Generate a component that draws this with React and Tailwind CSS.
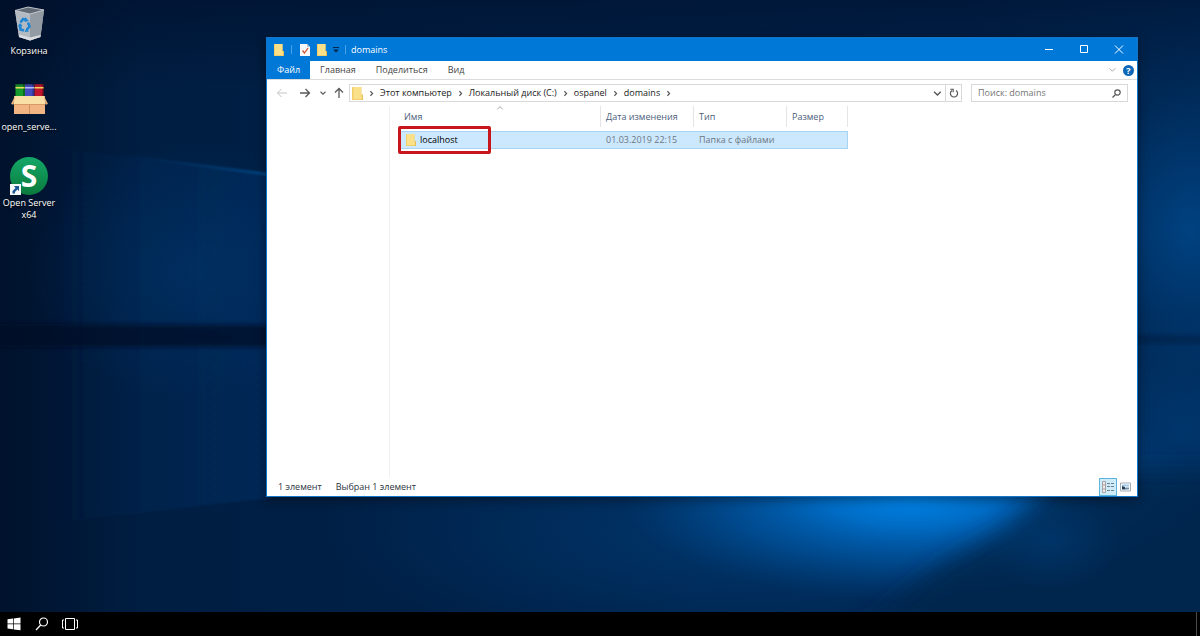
import React, { useState } from "react";

const crumbs = ["Этот компьютер", "Локальный диск (C:)", "ospanel", "domains"];

const tabs = ["Главная", "Поделиться", "Вид"];

const files = [
  {
    name: "localhost",
    date: "01.03.2019 22:15",
    type: "Папка с файлами",
    size: "",
  },
];

const columns = [
  { label: "Имя", width: "w-[202px]" },
  { label: "Дата изменения", width: "w-[93px]" },
  { label: "Тип", width: "w-[93px]" },
  { label: "Размер", width: "w-[61px]" },
];

const Wallpaper = () => (
  <svg
    className="absolute inset-0 w-full h-full"
    viewBox="0 0 1200 612"
    preserveAspectRatio="none"
    aria-hidden="true"
  >
    <defs>
      <linearGradient id="base" x1="0" y1="0" x2="1" y2="0">
        <stop offset="0" stopColor="#00122c" />
        <stop offset="0.12" stopColor="#001e42" />
        <stop offset="0.35" stopColor="#002046" />
        <stop offset="0.8" stopColor="#00234c" />
        <stop offset="1" stopColor="#002a58" />
      </linearGradient>
      <linearGradient id="topShade" x1="0" y1="0" x2="0" y2="1">
        <stop offset="0" stopColor="#000d28" stopOpacity="0.5" />
        <stop offset="1" stopColor="#000d28" stopOpacity="0" />
      </linearGradient>
      <radialGradient id="haze">
        <stop offset="0" stopColor="#003f7c" stopOpacity="0.7" />
        <stop offset="1" stopColor="#003f7c" stopOpacity="0" />
      </radialGradient>
      <radialGradient id="rightHaze">
        <stop offset="0" stopColor="#004c92" stopOpacity="0.7" />
        <stop offset="1" stopColor="#004c92" stopOpacity="0" />
      </radialGradient>
      <radialGradient id="glow">
        <stop offset="0" stopColor="#0088ee" />
        <stop offset="0.3" stopColor="#0074d2" stopOpacity="0.9" />
        <stop offset="0.65" stopColor="#0058a6" stopOpacity="0.6" />
        <stop offset="1" stopColor="#004888" stopOpacity="0" />
      </radialGradient>
      <linearGradient id="ray" x1="0" y1="0" x2="1" y2="0">
        <stop offset="0" stopColor="#00569c" stopOpacity="0" />
        <stop offset="1" stopColor="#0060ac" stopOpacity="0.6" />
      </linearGradient>
      <linearGradient id="panel" x1="0" y1="0" x2="1" y2="0">
        <stop offset="0" stopColor="#00397a" stopOpacity="0" />
        <stop offset="1" stopColor="#00397a" stopOpacity="0.35" />
      </linearGradient>
      <filter id="thin" x="-20%" y="-20%" width="140%" height="140%">
        <feGaussianBlur stdDeviation="1" />
      </filter>
      <filter id="soft" x="-20%" y="-20%" width="140%" height="140%">
        <feGaussianBlur stdDeviation="2" />
      </filter>
      <filter id="softer" x="-30%" y="-30%" width="160%" height="160%">
        <feGaussianBlur stdDeviation="12" />
      </filter>
    </defs>
    <rect width="1200" height="612" fill="url(#base)" />
    {/* left window pane */}
    <polygon points="40,146 270,175 270,498 40,524" fill="url(#panel)" filter="url(#thin)" />
    <ellipse cx="190" cy="270" rx="160" ry="130" fill="url(#haze)" opacity="0.5" />
    <ellipse cx="1190" cy="230" rx="110" ry="140" fill="url(#rightHaze)" />
    <ellipse cx="1180" cy="430" rx="120" ry="120" fill="url(#rightHaze)" opacity="0.5" />
    <rect width="1200" height="90" fill="url(#topShade)" />
    <polygon points="-10,324 270,325 270,347 -10,347" fill="#000f26" opacity="0.75" filter="url(#soft)" />
    <polygon points="1130,334 1210,336 1210,344 1130,344" fill="#001c40" opacity="0.5" filter="url(#soft)" />
    <polygon points="75,149 270,173 270,176" fill="url(#ray)" filter="url(#thin)" />
    {/* light below the explorer window */}
    <ellipse cx="760" cy="530" rx="440" ry="130" fill="url(#haze)" />
    <ellipse cx="910" cy="492" rx="290" ry="110" fill="url(#glow)" />
    <polygon
      points="1070,470 1010,528 940,566 850,640 1240,640 1240,470"
      fill="#00254e"
      opacity="0.88"
      filter="url(#softer)"
    />
    <ellipse cx="1050" cy="540" rx="70" ry="50" fill="url(#haze)" opacity="0.7" />
  </svg>
);

const FolderIcon = ({ className }) => (
  <svg className={className} viewBox="0 0 10 12" aria-hidden="true">
    <path d="M0 0h8.500v7H10v5H0z" fill="#e8be52" />
    <path d="M1 0h7.500v7.500H9V11.500H1z" fill="#fbe08a" />
    <path d="M0 0h1v12H0z" fill="#f3cf68" />
  </svg>
);

// one stroke icon for every arrow and chevron of the window
const Stroke = ({ d, className, width = 1 }) => (
  <svg
    className={className}
    viewBox="0 0 12 12"
    fill="none"
    stroke="currentColor"
    strokeWidth={width}
    aria-hidden="true"
  >
    <path d={d} />
  </svg>
);

const RecycleBin = () => (
  <svg className="w-[38px] h-[38px]" viewBox="0 0 38 38" aria-hidden="true">
    <path d="M5 5.500L18 2l16 3-3.500 27L20 35.500 9 32z" fill="#a9b0b8" />
    <path d="M5 5.500L20 9v26.500L9 32z" fill="#b4bac1" />
    <path d="M20 9l14-4-3.500 27L20 35.500z" fill="#929aa3" />
    <path d="M5 5.500L18 2l16 3-14 4z" fill="#626b75" />
    <path d="M5 5.500L18 2l16 3-14 4z" fill="none" stroke="#cfd4d9" strokeWidth="0.800" />
    <path d="M9 29.500L20 32.500l10.700-2.500-.5 2L20 35.500 9 32z" fill="#d9dde1" />
    <g fill="none" stroke="#1f86d6" strokeWidth="2.600">
      <path d="M10.500 17.500l2.500-3.500 3.500 1" />
      <path d="M18 17.500l1.500 4-2.500 3" />
      <path d="M14 25.500l-3.500-1-.5-4" />
    </g>
    <path d="M15 12l4 4-4.500 1zM19 26.500l-4.500.5 2-4zM7.500 21.500l2.500-3.500 2.500 3z" fill="#1f86d6" />
  </svg>
);

const Archive = () => (
  <svg className="w-[38px] h-[38px]" viewBox="0 0 38 38" aria-hidden="true">
    <rect x="5.500" y="3" width="9.500" height="14" fill="#159a2b" />
    <rect x="15" y="3" width="9.500" height="14" fill="#4449c0" />
    <rect x="24.500" y="3" width="9" height="14" fill="#c3152b" />
    <path d="M5.500 3h28v1.500h-28z" fill="#1c1c1c" opacity="0.4" />
    <path d="M13 3h2v14h-2zM22.500 3h2v14h-2zM32 3h1.500v14H32z" fill="#000" opacity="0.3" />
    <path d="M5.500 6h9v1.500h-9zM24.500 6h9v1.500h-9z" fill="#ecd65a" />
    <path d="M15 6h9v1.500h-9z" fill="#b9bcf0" />
    <path d="M4 15h31v18H4z" fill="#f0b583" />
    <path d="M5 15h29l1.500 8h-32z" fill="#f9dfa6" />
    <path d="M5 15L1 23l2.500.8zM34 15l4 8-2.500.8z" fill="#e6b07d" />
    <path d="M19 23.500h1V33h-1z" fill="#cf8f59" />
    <path d="M4 23h31v1H4z" fill="#d89a64" />
  </svg>
);

const OpenServer = () => (
  <div className="relative w-[38px] h-[38px] rounded-full bg-linear-to-b from-[#14a869] to-[#0a7a3c] flex items-center justify-center">
    <span className="text-white font-bold text-[30px] leading-none">S</span>
    <svg className="absolute left-0 bottom-0 w-[11px] h-[11px]" viewBox="0 0 11 11" aria-hidden="true">
      <path d="M0 0h11v11H0z" fill="#f4f8fb" />
      <path d="M4 2h5v5L7.400 5.400 5 8v1.500H2.500V7l3-3z" fill="#1b5796" />
    </svg>
  </div>
);

const shortcuts = [
  { label: "Корзина", icon: <RecycleBin /> },
  { label: "open_serve...", icon: <Archive /> },
  { label: "Open Server x64", icon: <OpenServer /> },
];

const TitleBar = () => (
  <header className="flex items-center h-[23px] shrink-0 bg-[#0078d7] text-white">
    <div className="flex items-center pl-[7px]">
      <FolderIcon className="w-[10px] h-[12px]" />
      <span className="w-px h-[9px] ml-[7px] bg-[#4aa0e4]" />
      <button aria-label="Свойства" className="ml-[8px]">
        <svg className="w-[10px] h-[12px]" viewBox="0 0 10 12" aria-hidden="true">
          <path d="M0 0h7l3 3v9H0z" fill="#f7f8fa" />
          <path d="M7 0v3h3z" fill="#b9c4cf" />
          <path d="M2.500 6.500l2 2.500 3.500-5" fill="none" stroke="#d0532f" strokeWidth="1.300" />
        </svg>
      </button>
      <button aria-label="Новая папка" className="ml-[7px]">
        <FolderIcon className="w-[10px] h-[12px]" />
      </button>
      <button aria-label="Настройка панели" className="ml-[6px]">
        <svg className="w-[6px] h-[6px]" viewBox="0 0 6 6" aria-hidden="true">
          <path d="M0 0h6v1H0zM0 2.500h6L3 5.500z" fill="#06284c" />
        </svg>
      </button>
      <span className="w-px h-[9px] ml-[6px] bg-[#4aa0e4]" />
    </div>
    <h1 className="flex-1 pl-[5px]">domains</h1>
    <button aria-label="Свернуть" className="w-[35px] h-full flex items-center justify-center">
      <Stroke className="w-[12px] h-[12px]" d="M2 5.500h8" />
    </button>
    <button aria-label="Развернуть" className="w-[35px] h-full flex items-center justify-center">
      <Stroke className="w-[12px] h-[12px]" d="M2.500 1.500h7v7h-7z" />
    </button>
    <button aria-label="Закрыть" className="w-[36px] h-full flex items-center justify-center">
      <Stroke className="w-[12px] h-[12px]" d="M2 1.500l8 8M10 1.500l-8 8" />
    </button>
  </header>
);

const Ribbon = () => (
  <nav className="flex items-stretch h-[19px] shrink-0 border-b border-[#dadbdc] text-[#444]">
    <button className="px-[10px] bg-[#0078d7] text-white">Файл</button>
    {tabs.map((tab) => (
      <button key={tab} className="px-[10px]">
        {tab}
      </button>
    ))}
    <div className="flex items-center ml-auto pr-[3px] gap-[6px]">
      <button aria-label="Развернуть ленту">
        <Stroke className="w-[10px] h-[10px] text-[#999]" d="M3 4l3.500 3.500L10 4" />
      </button>
      <button
        aria-label="Справка"
        className="w-[11px] h-[11px] rounded-full bg-[#0c67b8] text-white text-[9px] leading-none font-bold"
      >
        ?
      </button>
    </div>
  </nav>
);

const AddressBar = () => {
  const [query, setQuery] = useState("");

  return (
    <div className="flex items-center h-[26px] shrink-0 pr-[9px]">
      <div className="flex items-center w-[82px] shrink-0 pl-[9px] text-[#5a5a5a]">
        <button aria-label="Назад" className="text-[#c4c4c4]">
          <Stroke className="w-[12px] h-[12px]" d="M11 6H1.500M5.500 2L1.500 6l4 4" />
        </button>
        <button aria-label="Вперед" className="ml-[11px]">
          <Stroke className="w-[12px] h-[12px]" width={1.3} d="M1 6h9.500M6.500 2l4 4-4 4" />
        </button>
        <button aria-label="Последние расположения" className="ml-[7px]">
          <Stroke className="w-[10px] h-[10px]" width={1.3} d="M3 4.500L6 7.500l3-3" />
        </button>
        <button aria-label="Вверх" className="ml-[5px]">
          <Stroke className="w-[12px] h-[12px]" width={1.3} d="M6 11V1.500M2 5.500l4-4 4 4" />
        </button>
      </div>

      <div className="flex items-center flex-1 h-[18px] border border-[#d9d9d9]">
        <FolderIcon className="w-[11px] h-[13px] ml-[2px]" />
        <ol className="flex items-center text-[#1a1a1a]">
          {[...crumbs, ""].map((crumb) => (
            <li key={crumb} className="flex items-center">
              <Stroke className="w-[9px] h-[9px] mx-[4px] text-[#555]" width={1.5} d="M4.500 3l3 3-3 3" />
              {crumb && <a href="#">{crumb}</a>}
            </li>
          ))}
        </ol>
        <button aria-label="Предыдущие расположения" className="ml-auto px-[3px] text-[#555]">
          <Stroke className="w-[10px] h-[10px]" width={1.6} d="M2.500 4.500l4 4 4-4" />
        </button>
        <button
          aria-label="Обновить"
          className="h-full w-[16px] border-l border-[#d9d9d9] flex items-center justify-center text-[#555]"
        >
          <Stroke
            className="w-[10px] h-[10px]"
            width={1.4}
            d="M8.500 3A4.300 4.300 0 1 1 3.500 3M1.500 1.500h3.500v3.500"
          />
        </button>
      </div>

      <label className="flex items-center w-[157px] h-[18px] ml-[9px] px-[6px] border border-[#d9d9d9]">
        <input
          type="text"
          aria-label="Поиск"
          placeholder="Поиск: domains"
          value={query}
          onChange={(e) => setQuery(e.target.value)}
          className="flex-1 min-w-0 outline-none placeholder:text-[#757575]"
        />
        <svg
          className="w-[9px] h-[9px] text-[#555]"
          viewBox="0 0 9 9"
          fill="none"
          stroke="currentColor"
          strokeWidth="1.200"
          aria-hidden="true"
        >
          <circle cx="5.500" cy="3.500" r="2.700" />
          <path d="M3.500 5.500L.5 8.500" />
        </svg>
      </label>
    </div>
  );
};

const FileList = () => (
  <table className="table-fixed w-[449px] border-separate border-spacing-0 text-left">
    <thead>
      <tr>
        {columns.map((column, index) => (
          <th key={column.label} className={`${column.width} p-0 pb-[4px] font-normal`}>
            <div className="relative h-[21px] pl-[5px] leading-[22px] border-r border-[#e5e5e5] text-[#4c607a]">
              {column.label}
              {index === 0 && (
                <Stroke
                  className="absolute left-1/2 -top-[2px] -translate-x-1/2 w-[9px] h-[8px] text-[#777]"
                  d="M2 8l4-4 4 4"
                />
              )}
            </div>
          </th>
        ))}
      </tr>
    </thead>
    <tbody>
      {files.map((file) => (
        <tr key={file.name} className="h-[18px] bg-[#cce8ff] text-[#6d7680]">
          <td className="relative p-0 border-y border-l border-[#a9d5f5] text-black">
            <div className="flex items-center pl-[6px] gap-[4px]">
              <FolderIcon className="w-[10px] h-[12px]" />
              {file.name}
            </div>
            <div className="absolute -left-[2px] -top-[6px] w-[93px] h-[28px] rounded-xs border-[3px] border-[#c8161d]" />
          </td>
          <td className="p-0 pl-[5px] border-y border-[#a9d5f5]">{file.date}</td>
          <td className="p-0 pl-[5px] border-y border-[#a9d5f5]">{file.type}</td>
          <td className="p-0 pl-[5px] border-y border-r border-[#a9d5f5]">{file.size}</td>
        </tr>
      ))}
    </tbody>
  </table>
);

const StatusBar = () => (
  <footer className="flex items-center h-[19px] shrink-0 pl-[11px] pr-[6px] text-[#2b3440]">
    <span>1 элемент</span>
    <span className="ml-[14px]">Выбран 1 элемент</span>
    <button
      aria-label="Таблица"
      className="ml-auto w-[18px] h-[18px] border border-[#5fb4dc] bg-[#cdebf8] flex items-center justify-center"
    >
      <svg className="w-[14px] h-[12px]" viewBox="0 0 14 12" aria-hidden="true">
        <path d="M1.500 .5h3v11h-3z" fill="#f3e9e6" stroke="#a3a3a8" strokeWidth="1" />
        <path d="M1.500 4h3M1.500 8h3" stroke="#a3a3a8" />
        <path d="M6 2.500h3M10 2.500h3M6 5.500h3M10 5.500h3M6 9.500h3M10 9.500h3" stroke="#6f8190" />
      </svg>
    </button>
    <button aria-label="Крупные значки" className="ml-[3px]">
      <svg className="w-[11px] h-[10px]" viewBox="0 0 11 10" aria-hidden="true">
        <path d="M.5 1h10v8H.5z" fill="#fff" stroke="#a0abb5" />
        <path d="M2 2.500h7v2H2z" fill="#9cc9e8" />
        <path d="M2 4l3 1 1 2.500H2z" fill="#22405c" />
        <path d="M6 5.500h3v2H6z" fill="#6f8ea8" />
      </svg>
    </button>
  </footer>
);

const Taskbar = () => (
  <div className="flex items-center h-[24px] shrink-0 pl-[7px] bg-black text-white">
    <button aria-label="Пуск">
      <svg className="w-[14px] h-[14px]" viewBox="0 0 14 14" fill="currentColor" aria-hidden="true">
        <path d="M.5 2.300L6 1.500v5H.5zM6.700 1.400L13.500.5v6H6.700zM.5 7.300H6v5l-5.500-.8zM6.700 7.300h6.800v6l-6.800-.9z" />
      </svg>
    </button>
    <button aria-label="Поиск" className="ml-[14px]">
      <svg className="w-[14px] h-[14px]" viewBox="0 0 14 14" fill="none" stroke="currentColor" strokeWidth="1.200" aria-hidden="true">
        <circle cx="8.500" cy="5" r="4" />
        <path d="M5.700 8L1 13" />
      </svg>
    </button>
    <button aria-label="Представление задач" className="ml-[13px]">
      <svg className="w-[16px] h-[12px]" viewBox="0 0 16 12" fill="none" stroke="currentColor" aria-hidden="true">
        <path d="M3.500 .5h9v11h-9zM2 2H.5v8H2M14 2h1.500v8H14" />
      </svg>
    </button>
    <button aria-label="Свернуть все окна" className="ml-auto w-[4px] h-full border-l border-[#4a4a4a]" />
  </div>
);

const App = () => {
  return (
    <div className="flex flex-col h-screen overflow-hidden bg-black font-['Open_Sans','Noto_Sans',sans-serif] text-[9px] leading-[12px]">
      <main className="relative flex-1 min-h-0">
        <Wallpaper />

        {/* Desktop shortcuts */}
        <ul className="relative w-[58px] pt-[5px] text-white text-center">
          {shortcuts.map((item) => (
            <li key={item.label} className="min-h-[76px]">
              <button className="w-full flex flex-col items-center gap-[2px]">
                {item.icon}
                <span className="[text-shadow:0_1px_2px_#000]">{item.label}</span>
              </button>
            </li>
          ))}
        </ul>

        {/* Explorer window */}
        <section className="absolute left-[266px] right-[62px] top-[37px] bottom-[115px] flex flex-col bg-white border border-[#1476c8] shadow-[0_3px_10px_rgba(0,0,0,0.4)]">
          <TitleBar />
          <Ribbon />
          <AddressBar />
          <div className="flex flex-1 min-h-0">
            <aside className="w-[123px] shrink-0 border-r border-[#f0f0f0]" />
            <div className="flex-1 pl-[9px] min-w-0">
              <FileList />
            </div>
          </div>
          <StatusBar />
        </section>
      </main>
      <Taskbar />
    </div>
  );
};

export default App;
